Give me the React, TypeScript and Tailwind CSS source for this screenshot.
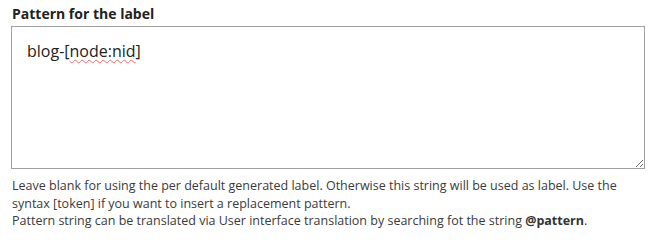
import React from "react";

export default function App() {
  return (
    <div className="w-[658px] h-[237px] bg-white text-[#333] pt-[4px] pl-[11px]" style={{ fontFamily: '"Open Sans", "Noto Sans", sans-serif' }}>
      <label className="block text-[14px] font-bold leading-[20px] pl-[1px] mb-[2px] text-[#222]">Pattern for the label</label>
      <div className="relative w-[634px] h-[143px] border border-[#a0a0a0] bg-white">
        <div className="pl-[15px] pt-[12px] text-[16px] leading-[24px] text-[#222]">
          blog-[<span className="underline decoration-wavy decoration-[#f06a6a] decoration-[1px] underline-offset-[2px]">node:nid</span>]
        </div>
        <textarea className="absolute inset-0 w-full h-full bg-transparent outline-none resize-y text-transparent" defaultValue="" aria-label="Pattern for the label" />
      </div>
      <div className="mt-[8px] pl-[1px] text-[12.5px] leading-[17.5px] text-[#3a3a3a]">
        Leave blank for using the per default generated label. Otherwise this string will be used as label. Use the
        <br />
        syntax [token] if you want to insert a replacement pattern.
        <br />
        Pattern string can be translated via User interface translation by searching fot the string <strong className="font-bold text-[#333]">@pattern</strong>.
      </div>
    </div>
  );
}
